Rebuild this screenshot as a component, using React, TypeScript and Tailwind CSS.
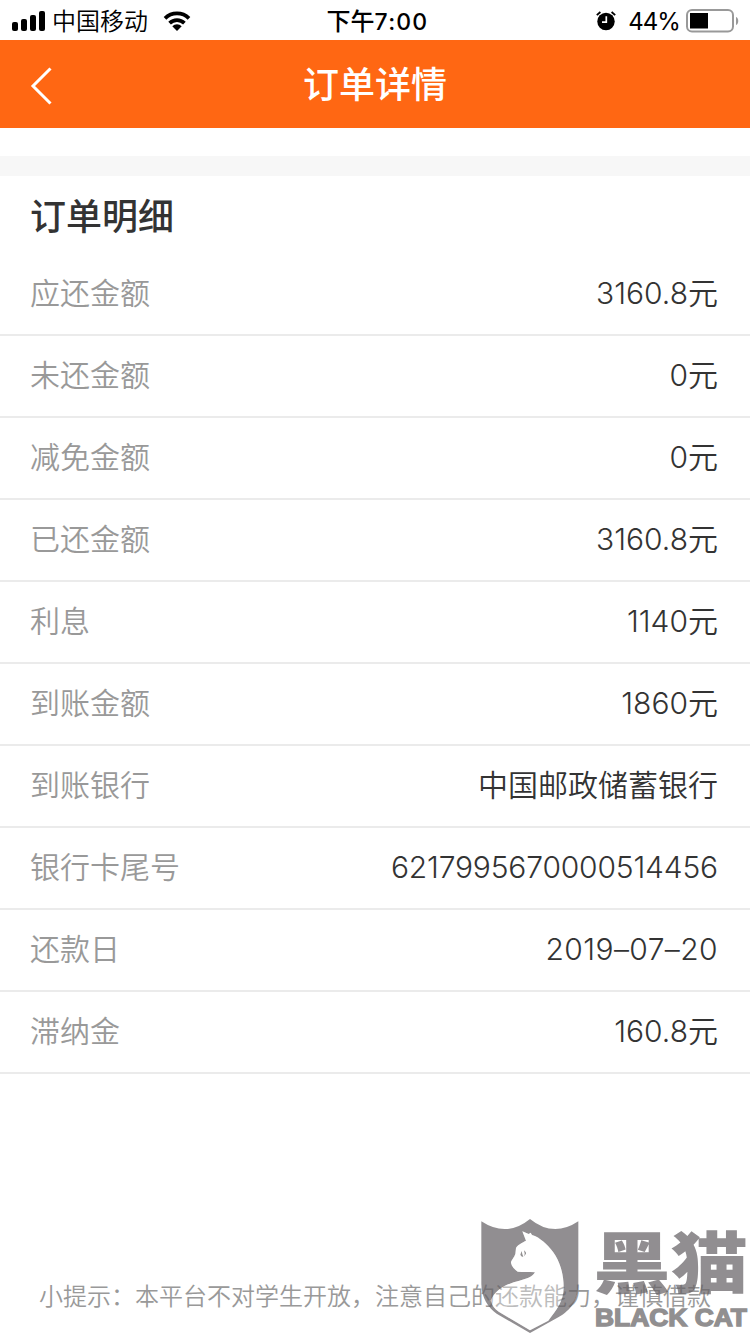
const rows: [string, string, string?][] = [
  ['应还金额', '3160.8元'],
  ['未还金额', '0元'],
  ['减免金额', '0元'],
  ['已还金额', '3160.8元'],
  ['利息', '1140元'],
  ['到账金额', '1860元'],
  ['到账银行', '中国邮政储蓄银行'],
  ['银行卡尾号', '6217995670000514456', 'tracking-[-0.17px]'],
  ['还款日', '2019–07–20', 'tracking-[0.4px]'],
  ['滞纳金', '160.8元'],
];

function StatusBar() {
  return (
    <div className="grid h-10 grid-cols-3 items-center text-[24px] leading-[38px] text-black">
      <div className="flex items-center pl-3">
        <svg width="34" height="20" viewBox="0 0 34 20">
          <rect x="0" y="11" width="6" height="9" rx="2" />
          <rect x="9" y="8" width="6" height="12" rx="2" />
          <rect x="18" y="4" width="6" height="16" rx="2" />
          <rect x="27" y="0" width="6" height="20" rx="2" />
        </svg>
        <span className="ml-1.5 pt-[3px]">中国移动</span>
        <svg className="ml-[15px]" width="28" height="20" viewBox="0 0 28 20">
          <path d="M2 7.4a17 17 0 0 1 24 0M6.6 12.1a10.5 10.5 0 0 1 14.8 0" fill="none" stroke="#000" strokeWidth="3.7" />
          <path d="M9.3 15.2a6.7 6.7 0 0 1 9.4 0L14 20z" />
        </svg>
      </div>
      <div className="pt-0.5 pl-[5px] text-center font-medium">
        下午<span className="text-[23px] tracking-[1.2px]">7:00</span>
      </div>
      <div className="flex items-center justify-end pr-[11px]">
        <svg width="20" height="20" viewBox="0 0 20 20">
          <circle cx="10" cy="10.5" r="8.7" />
          <path d="M.8 4.2 4.4 1M19.2 4.2 15.6 1" stroke="#000" strokeWidth="1.8" />
          <path d="M10.3 5.2v6H6" fill="none" stroke="#fff" strokeWidth="1.7" />
        </svg>
        <span className="ml-3 pt-0.5 text-[24px] font-normal tracking-[-0.9px]">44%</span>
        <svg className="mt-px ml-1.5" width="53" height="24" viewBox="0 0 53 24">
          <rect x="1" y="1" width="46" height="21.5" rx="5" fill="none" stroke="#999" strokeWidth="2" />
          <rect x="4" y="4" width="18" height="15.5" />
          <path d="M50 8c3 1 3 7 0 8z" fill="#999" />
        </svg>
      </div>
    </div>
  );
}

const cat =
  'M157 82L168 110C155 117 142 123 138 132L136 150C132 162 122 170 123 177C125 188 133 196 143 203C158 205 175 203 195 205C186 220 167 225 148 230C115 238 76 254 62 290C66 304 74 314 86 323L180 379L235 350C259 320 281 292 281 250C281 196 262 150 225 117C209 103 198 96 186 93L182 86L176 90Z';

function Watermark() {
  return (
    <div className="absolute top-[1204px] left-[470px] h-[130px] w-[280px]">
      <svg width="280" height="130" viewBox="0 0 840 390">
        <path
          fill="#666366"
          fillOpacity=".72"
          fillRule="evenodd"
          d={'M34 52Q110 102 180 45Q250 102 325 52V240C324 300 292 328 246 350L180 387L80 329C55 312 34 280 34 240Z' + cat}
        />
        <path fill="#fff" fillOpacity=".35" d={cat} />
        <path fill="#918f90" d="M151 152L155 141Q156 150 160 158Q154 160 151 152ZM162 139Q171 147 167 151L162 157Q166 150 162 139Z" />
        <text transform="translate(370 252) scale(1 .87)" fill="#666366" fillOpacity=".72" fontSize="232" fontWeight="900" textLength="464" lengthAdjust="spacingAndGlyphs">黑猫</text>
        <text x="375" y="367" fill="#918f90" fontSize="70" fontWeight="700" fontFamily="Liberation Sans, sans-serif" textLength="456" lengthAdjust="spacingAndGlyphs" stroke="#918f90" strokeWidth="4">BLACK CAT</text>
      </svg>
    </div>
  );
}

export default function App() {
  return (
    <div className="relative flex h-[1334px] w-[750px] flex-col overflow-hidden bg-white font-['Inter','Noto_Sans_CJK_SC',sans-serif] font-[350]">
      <StatusBar />
      <header className="grid h-[88px] grid-cols-[80px_1fr_80px] items-center bg-[#ff6713] text-white">
        <svg className="mt-1 ml-[29px]" width="23" height="38" viewBox="0 0 23 38" fill="none" stroke="#fff" strokeWidth="3">
          <path d="M21.5 1.5 4 19l17.5 17.5" />
        </svg>
        <h1 className="mt-0.5 text-center text-[36px] leading-[86px] font-medium">订单详情</h1>
      </header>
      <div className="mt-7 h-5 bg-[#f7f7f7]" />
      <h2 className="h-[78px] pl-[30px] text-[36px] leading-[82px] font-medium text-[#333]">订单明细</h2>
      {rows.map(([label, value, tracking]) => (
        <div key={label} className="flex h-[82px] items-start justify-between border-b-2 border-[#ebebeb] pr-8 pl-[30px] text-[30px] leading-[78px]">
          <span className="text-[#999]">{label}</span>
          <span className={`text-[#333] ${tracking ?? ''}`}>{value}</span>
        </div>
      ))}
      <p className="mt-auto mb-[15px] text-center text-[24px] leading-[44px] text-[#999]">
        小提示：本平台不对学生开放，注意自己的还款能力，谨慎借款
      </p>
      <Watermark />
    </div>
  );
}
